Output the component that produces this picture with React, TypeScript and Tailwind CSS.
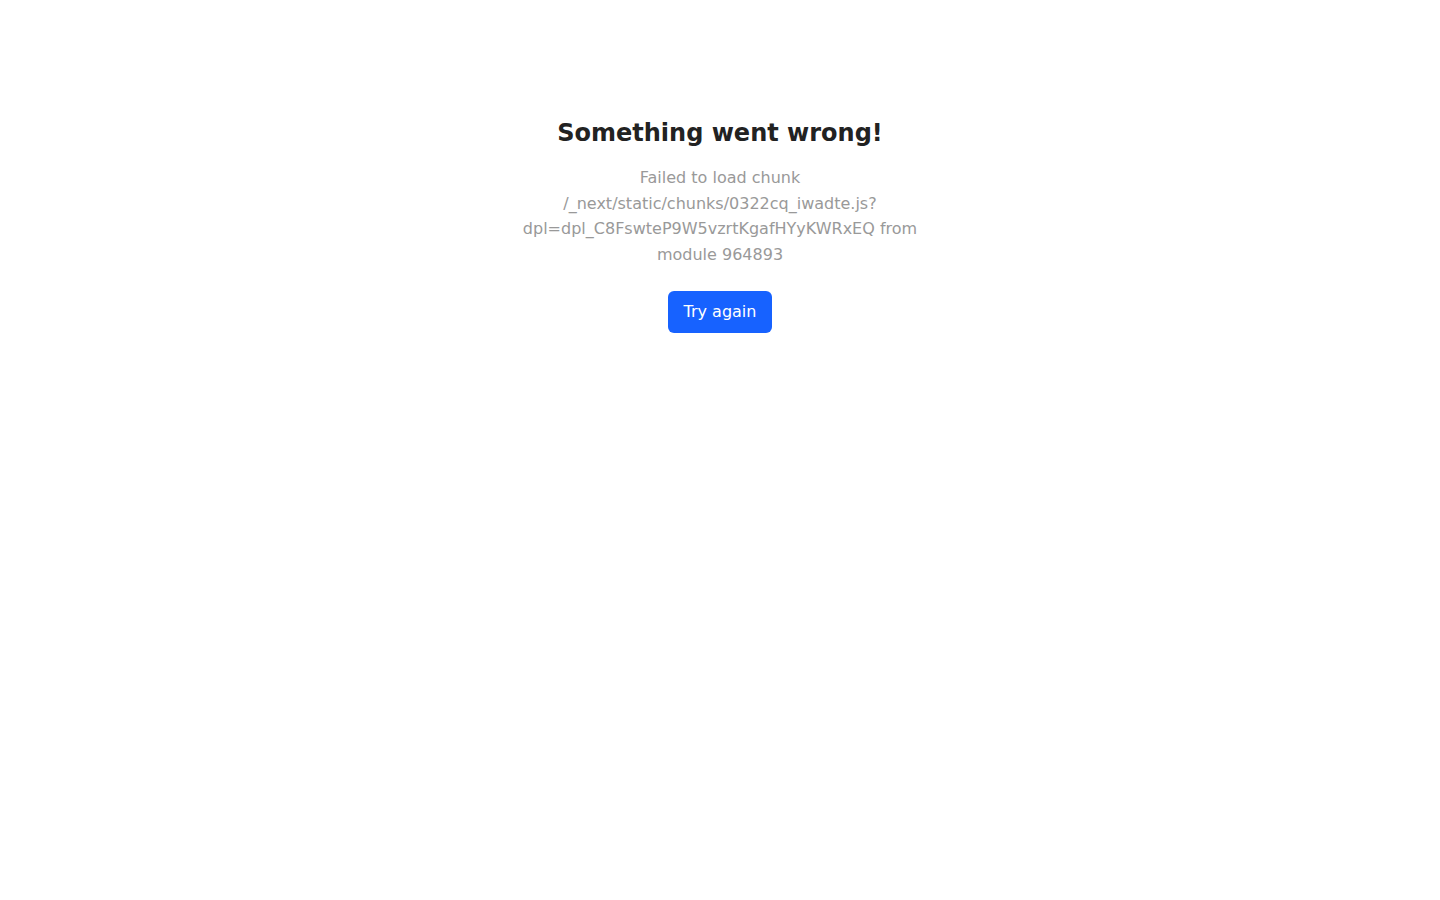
import React from "react";

export default function App() {
  return (
    <div
      className="min-h-screen bg-white flex flex-col items-center pt-[115px] px-4 text-center"
      style={{ fontFamily: '"DejaVu Sans", sans-serif' }}
    >
      <h2 className="text-[24px] leading-[36px] font-bold text-[#222222]">Something went wrong!</h2>
      <p className="mt-[14px] max-w-[400px] text-[16px] leading-[25.6px] text-[#999999] break-words">
        Failed to load chunk /_next/static/chunks/0322cq_iwadte.js?dpl=dpl_C8FswteP9W5vzrtKgafHYyKWRxEQ from module 964893
      </p>
      <button className="mt-[24px] h-[42px] px-[16px] rounded-[6px] bg-[#1762ff] text-white text-[16px] leading-[20px]">
        Try again
      </button>
    </div>
  );
}
